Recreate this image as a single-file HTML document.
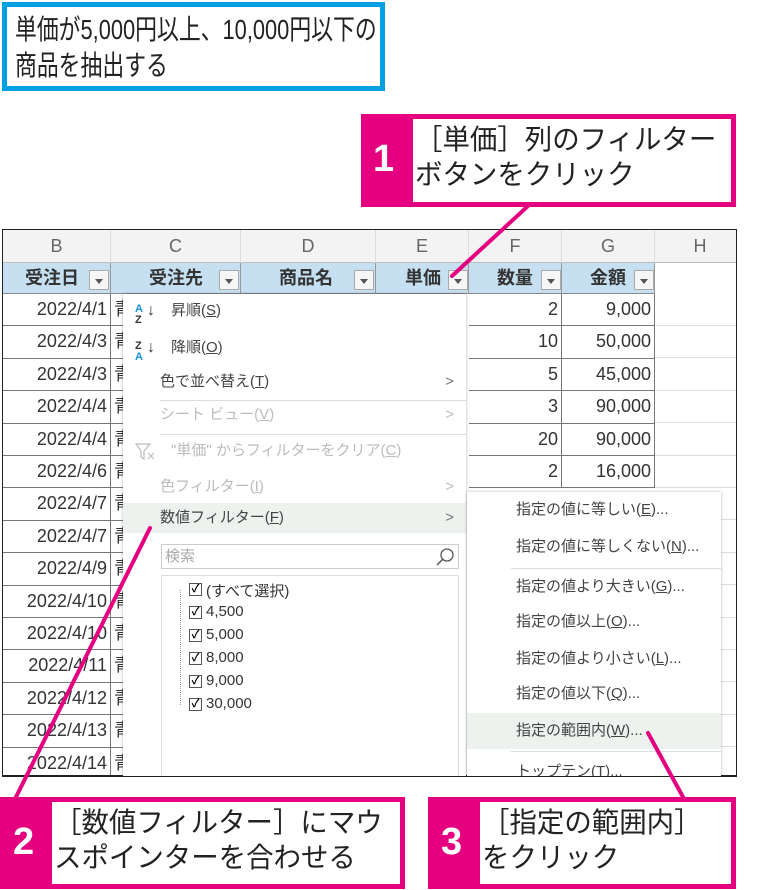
<!DOCTYPE html>
<html><head><meta charset="utf-8"><style>
*{margin:0;padding:0;box-sizing:border-box}
body{width:783px;height:890px;background:#fff;position:relative;overflow:hidden;font-family:"Liberation Sans","Noto Sans CJK JP",sans-serif;color:#333}
.abs{position:absolute}
.blue{left:2px;top:2px;width:383px;height:89px;border:5px solid #00a0e3;font-size:28px;line-height:36px;padding:5px 0 0 8px;color:#222;white-space:nowrap;overflow:hidden}
.blue span{display:inline-block;transform:scaleX(0.78);transform-origin:left}
.call{background:#e5007f}
.call .num{position:absolute;color:#fff;font-size:38px;font-weight:bold}
.call .in{position:absolute;background:#fff;font-size:28px;line-height:35px;color:#222;padding:3px 0 0 2px;white-space:nowrap;overflow:hidden}
.call .in span{display:inline-block;transform:scaleX(0.98);transform-origin:left}
.sheet{left:2px;top:229px;width:735px;height:547px;border:1.5px solid #222;overflow:hidden;background:#fff}
.colh{position:absolute;top:0;height:33px;background:#f3f3f3;border-right:1px solid #ddd;border-bottom:1px solid #bbb;text-align:center;font-size:18px;line-height:33px;color:#666}
.th{position:absolute;top:33px;height:31px;background:#c6e0f1;border-right:1px solid #999;border-bottom:1px solid #888;font-size:18px;line-height:31px;font-weight:bold;color:#333}
.dd{position:absolute;top:7px;width:20px;height:20px;border:1px solid #aaa;background:#f6f6f6}
.dd:after{content:"";position:absolute;left:5px;top:8px;border:4px solid transparent;border-top:5px solid #555}
.cell{position:absolute;height:32.4px;border-right:1.5px solid #777;border-bottom:1.5px solid #777;font-size:18px;line-height:31px;text-align:right;padding-right:3px;color:#333}
.gl{position:absolute;height:1px;background:#ddd}
.menu{left:123px;top:294px;width:343px;height:490px;background:#fff;box-shadow:0 0 3px rgba(0,0,0,.3);font-size:15px;color:#444}
.mi{position:absolute;left:0;width:343px;height:32px;line-height:32px}
.sub{left:467px;top:492px;width:254px;height:300px;background:#fff;box-shadow:0 0 3px rgba(0,0,0,.3);font-size:15px;color:#444}
.si{position:absolute;left:0;width:254px;height:36px;line-height:36px;padding-left:49px}
.arr{position:absolute;right:12px;color:#777}
.chk{position:absolute;left:28px;width:13px;height:13px;border:1px solid #555;font-size:11px;line-height:11px;text-align:center;color:#000;font-weight:bold}
</style></head><body>

<div class="abs blue"><span>単価が5,000円以上、10,000円以下の</span><br><span>商品を抽出する</span></div>

<div class="abs sheet">
 <div class="colh" style="left:0;width:108px">B</div>
 <div class="colh" style="left:108px;width:130px">C</div>
 <div class="colh" style="left:238px;width:135px">D</div>
 <div class="colh" style="left:373px;width:93px">E</div>
 <div class="colh" style="left:466px;width:93px">F</div>
 <div class="colh" style="left:559px;width:93px">G</div>
 <div class="colh" style="left:652px;width:90px;border-right:0">H</div>
 <div class="th" style="left:0;width:108px;padding-left:22px">受注日<div class="dd" style="left:86px"></div></div>
 <div class="th" style="left:108px;width:130px;padding-left:38px">受注先<div class="dd" style="left:108px"></div></div>
 <div class="th" style="left:238px;width:135px;padding-left:38px">商品名<div class="dd" style="left:113px"></div></div>
 <div class="th" style="left:373px;width:93px;padding-left:29px">単価<div class="dd" style="left:72px"></div></div>
 <div class="th" style="left:466px;width:93px;padding-left:28px">数量<div class="dd" style="left:72px"></div></div>
 <div class="th" style="left:559px;width:93px;padding-left:28px">金額<div class="dd" style="left:72px"></div></div>
 <div id="rows"></div>
</div>

<script>
var d=["2022/4/1","2022/4/3","2022/4/3","2022/4/4","2022/4/4","2022/4/6","2022/4/7","2022/4/7","2022/4/9","2022/4/10","2022/4/10","2022/4/11","2022/4/12","2022/4/13","2022/4/14","2022/4/15"];
var q=["2","10","5","3","20","2"],g=["9,000","50,000","45,000","90,000","90,000","16,000"];
var h="";
for(var i=0;i<16;i++){var t=64+i*32.4;
h+='<div class="cell" style="left:0;top:'+t+'px;width:108px">'+d[i]+'</div>';
h+='<div class="cell" style="left:108px;top:'+t+'px;width:130px;text-align:left;padding-left:3px">青</div>';
if(i<6){h+='<div class="cell" style="left:466px;top:'+t+'px;width:93px">'+q[i]+'</div><div class="cell" style="left:559px;top:'+t+'px;width:93px">'+g[i]+'</div>';}
h+='<div class="gl" style="left:652px;width:90px;top:'+(t+31)+'px"></div>';}
document.getElementById("rows").innerHTML=h;
</script>

<div class="abs menu">
 <div class="mi" style="top:1px;padding-left:48px"><span style="position:absolute;left:12px;font-size:11px;line-height:11px;top:9px;color:#1a8fd8;font-weight:bold">A<br><span style="color:#333">Z</span></span><span style="position:absolute;left:24px;font-size:16px;color:#333">↓</span>昇順(<u>S</u>)</div>
 <div class="mi" style="top:38px;padding-left:48px"><span style="position:absolute;left:12px;font-size:11px;line-height:11px;top:9px;color:#333;font-weight:bold">Z<br><span style="color:#1a8fd8">A</span></span><span style="position:absolute;left:24px;font-size:16px;color:#333">↓</span>降順(<u>O</u>)</div>
 <div class="mi" style="top:72px;padding-left:37px">色で並べ替え(<u>T</u>)<span class="arr">&gt;</span></div>
 <div class="abs" style="left:37px;top:106px;width:306px;height:1px;background:#ddd"></div>
 <div class="mi" style="top:105px;padding-left:37px;color:#bbb">シート ビュー(<u>V</u>)<span class="arr" style="color:#bbb">&gt;</span></div>
 <div class="abs" style="left:37px;top:140px;width:306px;height:1px;background:#ddd"></div>
 <div class="mi" style="top:141px;padding-left:48px;color:#bbb"><svg style="position:absolute;left:12px;top:8px" width="22" height="18"><path d="M1 1 L15 1 L9 8 L9 16 L6 14 L6 8 Z" fill="none" stroke="#bbb" stroke-width="1.2"/><path d="M13 10 L19 16 M19 10 L13 16" stroke="#bbb" stroke-width="1.2"/></svg>"単価" からフィルターをクリア(<u>C</u>)</div>
 <div class="mi" style="top:177px;padding-left:37px;color:#bbb">色フィルター(<u>I</u>)<span class="arr" style="color:#bbb">&gt;</span></div>
 <div class="mi" style="top:209px;padding-left:37px;background:#eef2ef;height:30px;line-height:30px">数値フィルター(<u>F</u>)<span class="arr">&gt;</span></div>
 <div class="abs" style="left:38px;top:250px;width:298px;height:25px;border:1px solid #ccc;color:#aaa;padding-left:3px;line-height:23px">検索<svg style="position:absolute;right:3px;top:2px" width="20" height="20"><circle cx="12" cy="8" r="6" fill="none" stroke="#555" stroke-width="1.3"/><line x1="8" y1="12" x2="2" y2="18" stroke="#555" stroke-width="1.5"/></svg></div>
 <div class="abs" style="left:38px;top:281px;width:298px;height:220px;border:1px solid #ddd"></div>
 <div class="abs" style="left:57px;top:296px;width:1px;height:115px;border-left:1px dotted #999"></div>
 <div class="abs" style="left:38px;top:285px;font-size:15px;color:#333;width:200px">
  <div style="position:relative;height:23px"><span class="chk" style="top:4px">✓</span><span style="position:absolute;left:45px;top:1px">(すべて選択)</span></div>
  <div style="position:relative;height:23px"><span class="chk" style="top:4px">✓</span><span style="position:absolute;left:45px;top:1px">4,500</span></div>
  <div style="position:relative;height:23px"><span class="chk" style="top:4px">✓</span><span style="position:absolute;left:45px;top:1px">5,000</span></div>
  <div style="position:relative;height:23px"><span class="chk" style="top:4px">✓</span><span style="position:absolute;left:45px;top:1px">8,000</span></div>
  <div style="position:relative;height:23px"><span class="chk" style="top:4px">✓</span><span style="position:absolute;left:45px;top:1px">9,000</span></div>
  <div style="position:relative;height:23px"><span class="chk" style="top:4px">✓</span><span style="position:absolute;left:45px;top:1px">30,000</span></div>
 </div>
</div>

<div class="abs sub">
 <div class="si" style="top:0">指定の値に等しい(<u>E</u>)...</div>
 <div class="si" style="top:37px">指定の値に等しくない(<u>N</u>)...</div>
 <div class="abs" style="left:44px;top:76px;width:210px;height:1px;background:#ddd"></div>
 <div class="si" style="top:77px">指定の値より大きい(<u>G</u>)...</div>
 <div class="si" style="top:112px">指定の値以上(<u>O</u>)...</div>
 <div class="si" style="top:149px">指定の値より小さい(<u>L</u>)...</div>
 <div class="si" style="top:184px">指定の値以下(<u>Q</u>)...</div>
 <div class="si" style="top:221px;background:#eef2ef">指定の範囲内(<u>W</u>)...</div>
 <div class="abs" style="left:44px;top:259px;width:210px;height:1px;background:#ddd"></div>
 <div class="si" style="top:262px">トップテン(<u>T</u>)...</div>
</div>
<div class="abs" style="left:0;top:776px;width:783px;height:114px;background:#fff"></div>
<div class="abs" style="left:2px;top:229px;width:735px;height:548px;border:1.5px solid #222"></div>

<svg class="abs" style="left:0;top:0" width="783" height="890">
 <g stroke="#e5007f" stroke-width="4" stroke-linecap="round">
  <line x1="528" y1="206" x2="452" y2="276"/>
  <line x1="150" y1="528" x2="16" y2="797"/>
  <line x1="648" y1="733" x2="683" y2="797"/>
 </g>
</svg>

<div class="abs call" style="left:361px;top:114px;width:375px;height:93px">
 <div class="num" style="left:12px;top:24px">1</div>
 <div class="in" style="left:52px;top:5px;width:318px;height:83px"><span>［単価］列のフィルター</span><br><span>ボタンをクリック</span></div>
</div>
<div class="abs call" style="left:0;top:797px;width:405px;height:92px">
 <div class="num" style="left:13px;top:24px">2</div>
 <div class="in" style="left:52px;top:5px;width:348px;height:82px"><span>［数値フィルター］にマウ</span><br><span>スポインターを合わせる</span></div>
</div>
<div class="abs call" style="left:428px;top:797px;width:308px;height:92px">
 <div class="num" style="left:13px;top:24px">3</div>
 <div class="in" style="left:52px;top:5px;width:251px;height:82px"><span>［指定の範囲内］</span><br><span>をクリック</span></div>
</div>
</body></html>
